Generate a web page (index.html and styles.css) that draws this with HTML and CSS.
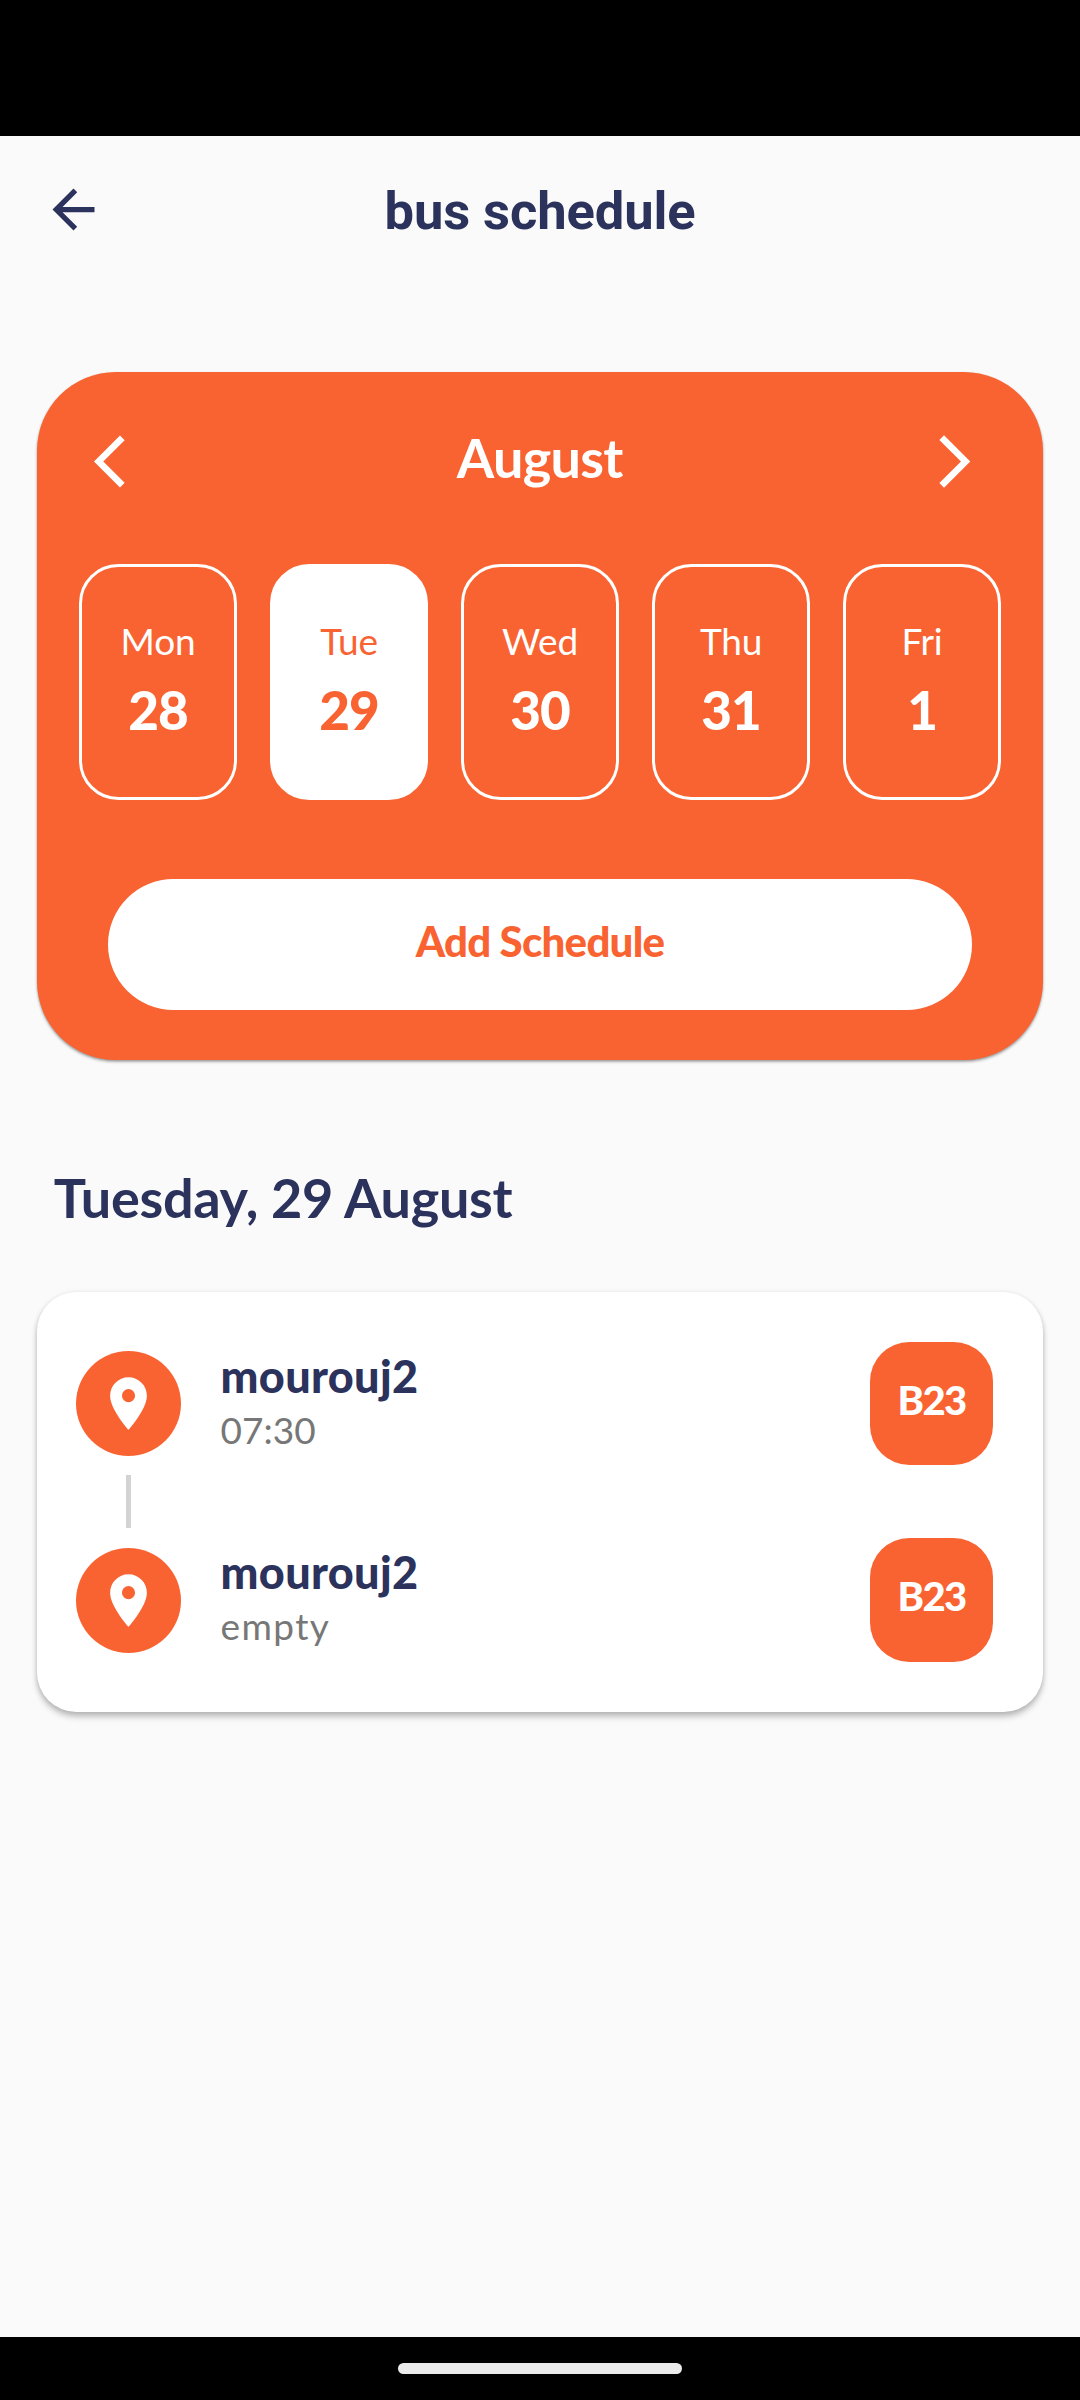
FILE: index.html
```html
<!DOCTYPE html>
<html lang="en">
<head>
<meta charset="utf-8">
<title>bus schedule</title>
<link rel="stylesheet" href="styles.css">
</head>
<body>
<div class="status-bar"></div>
<main class="screen">
  <header class="app-bar">
    <svg class="icon" viewBox="0 0 24 24"><path d="M20 11H7.83l5.59-5.59L12 4l-8 8 8 8 1.41-1.41L7.83 13H20z"/></svg>
    <h1 class="title">bus schedule</h1>
  </header>

  <section class="calendar">
    <div class="month-row">
      <svg class="icon" viewBox="0 0 24 24"><path d="M11.67 3.87 9.9 2.1 0 12l9.9 9.9 1.77-1.77L3.54 12z"/></svg>
      <span class="month">August</span>
      <svg class="icon" viewBox="0 0 24 24"><path d="M6.23 20.23 8 22l10-10L8 2 6.23 3.77 14.46 12z"/></svg>
    </div>
    <div class="days">
      <div class="day"><span class="name">Mon</span><span class="num">28</span></div>
      <div class="day selected"><span class="name">Tue</span><span class="num">29</span></div>
      <div class="day"><span class="name">Wed</span><span class="num">30</span></div>
      <div class="day"><span class="name">Thu</span><span class="num">31</span></div>
      <div class="day"><span class="name">Fri</span><span class="num">1</span></div>
    </div>
    <div class="add">Add Schedule</div>
  </section>

  <h2 class="date">Tuesday, 29 August</h2>

  <section class="trips">
    <div class="trip">
      <div class="pin"><svg class="icon" viewBox="0 0 24 24"><path d="M12 2C8.13 2 5 5.13 5 9c0 5.25 7 13 7 13s7-7.75 7-13c0-3.87-3.13-7-7-7zm0 9.5a2.5 2.5 0 0 1 0-5 2.5 2.5 0 0 1 0 5z"/></svg></div>
      <div class="info"><span class="stop">mourouj2</span><span class="time">07:30</span></div>
      <div class="badge">B23</div>
    </div>
    <div class="link"></div>
    <div class="trip">
      <div class="pin"><svg class="icon" viewBox="0 0 24 24"><path d="M12 2C8.13 2 5 5.13 5 9c0 5.25 7 13 7 13s7-7.75 7-13c0-3.87-3.13-7-7-7zm0 9.5a2.5 2.5 0 0 1 0-5 2.5 2.5 0 0 1 0 5z"/></svg></div>
      <div class="info"><span class="stop">mourouj2</span><span class="time empty">empty</span></div>
      <div class="badge">B23</div>
    </div>
  </section>
</main>
<footer class="nav-bar"><div class="handle"></div></footer>
</body>
</html>
```
FILE: styles.css
```css
* { box-sizing: border-box; }

body {
  margin: 0;
  width: 1080px;
  height: 2400px;
  display: flex;
  flex-direction: column;
  background: #fafafa;
  font-family: Lato, "Open Sans", sans-serif;
  color: #2b325c;
  white-space: nowrap;
}

.status-bar { height: 136px; background: #000; }

.screen { flex: 1; padding: 0 36.75px; }

.icon { display: block; width: 63px; height: 63px; fill: currentColor; flex: none; }

.app-bar {
  display: grid;
  grid-template-columns: 63px 1fr 63px;
  align-items: center;
  height: 147px;
  padding: 0 5.25px;
}

.title {
  margin: 3px 0 0;
  text-align: center;
  font: 700 52.5px/60px Roboto, sans-serif;
  letter-spacing: -.1px;
}

.calendar {
  height: 688px;
  margin-top: 89px;
  padding-top: 58px;
  border-radius: 78.75px;
  background: #f96332;
  color: #fff;
  box-shadow: 0 2px 3px rgba(0, 0, 0, .28), 0 1px 2px rgba(0, 0, 0, .15);
}

.month-row {
  display: flex;
  justify-content: space-between;
  align-items: flex-start;
  padding: 0 57.75px 0 57.25px;
}

.month { font-size: 54px; line-height: 56px; font-weight: 700; letter-spacing: -.7px; }

.days {
  display: flex;
  justify-content: space-between;
  margin-top: 70.5px;
  padding: 0 42.25px;
}

.day {
  display: flex;
  flex-direction: column;
  align-items: center;
  gap: 12px;
  width: 158px;
  height: 236.5px;
  padding-top: 49px;
  border: 3px solid #fff;
  border-radius: 39.4px;
}

.name { font-size: 37px; line-height: 50px; letter-spacing: -.2px; }
.num { font-size: 53px; line-height: 64px; font-weight: 900; letter-spacing: -1px; }
.selected { background: #fff; color: #f96332; }

.add {
  height: 131px;
  margin: 79px 71.25px 0;
  border-radius: 66px;
  background: #fff;
  color: #f96332;
  text-align: center;
  font-size: 42px;
  line-height: 124px;
  font-weight: 900;
  letter-spacing: -.75px;
}

.date {
  margin: 105.5px 0 0 17px;
  font-size: 54px;
  line-height: 64px;
  font-weight: 700;
  letter-spacing: -.3px;
}

.trips {
  height: 420px;
  margin-top: 62px;
  padding: 50px 50px 0 39.25px;
  border-radius: 39.4px;
  background: #fff;
  box-shadow: 0 5px 6px rgba(0, 0, 0, .22), 0 1px 5px rgba(0, 0, 0, .12);
}

.trip { display: flex; height: 123.4px; }

.pin {
  align-self: center;
  display: grid;
  place-items: center;
  width: 105px;
  height: 105px;
  border-radius: 50%;
  background: #f96332;
  color: #fff;
}

.info { display: flex; flex-direction: column; flex: 1; padding: 7px 0 0 39.5px; }
.stop { font-size: 45px; line-height: 54px; font-weight: 900; letter-spacing: .35px; }
.time { font-size: 37px; line-height: 54px; color: #777; }
.empty { letter-spacing: 1.4px; }

.badge {
  width: 123.4px;
  border-radius: 39.4px;
  background: #f96332;
  color: #fff;
  text-align: center;
  font-size: 40px;
  line-height: 117px;
  font-weight: 900;
  letter-spacing: -1.6px;
}

.link {
  width: 5.25px;
  height: 52.5px;
  margin: 10.5px 0 10.6px 49.9px;
  background: #d3d3d3;
}

.nav-bar {
  display: grid;
  place-items: center;
  height: 63px;
  background: #000;
}

.handle { width: 284px; height: 11px; border-radius: 6px; background: #ebebeb; }
```
